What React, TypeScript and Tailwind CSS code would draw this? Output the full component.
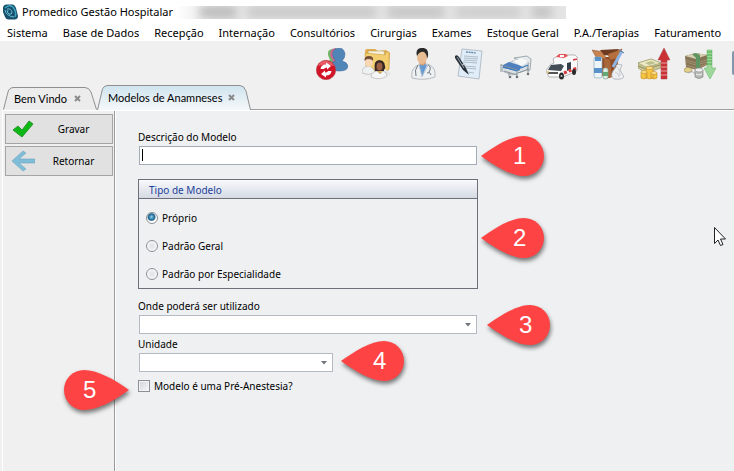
import React from 'react';
import { clsx } from 'clsx';

const menuItems = [
  'Sistema',
  'Base de Dados',
  'Recepção',
  'Internação',
  'Consultórios',
  'Cirurgias',
  'Exames',
  'Estoque Geral',
  'P.A./Terapias',
  'Faturamento',
];

const modelTypes = ['Próprio', 'Padrão Geral', 'Padrão por Especialidade'];

const AppLogo = () => (
  <svg viewBox="0 0 16 16" className="h-4 w-4 shrink-0">
    <path d="M1 4 Q1 1 4 0.500 L11 0.500 Q13 1 14 4 L16 12 Q16 15 13 15.500 L6 15.500 Q4 15 3 13 L1 8Z" fill="#17506a" />
    <path d="M3 4 Q7 0 11 3 Q15 8 13 13" fill="none" stroke="#3fa3c4" strokeWidth="1.500" />
    <path d="M3 6 Q4 12 12 13 M5 5 Q9 4 10 8 Q10 11 7 10 Q4 8 6 6" fill="none" stroke="#69bdd6" />
  </svg>
);

const UsersSyncIcon = () => (
  <svg viewBox="0 0 32 32" className="h-8 w-8">
    <path d="M17 1 q-6 0-5 6 q1 3 2 5 l-3 3 h10z" fill="#71b765" />
    <path d="M20 0 q-6 0-6 7 q1 4 3 5 l-3 4 h9z" fill="#c46a91" />
    <path d="M23 0 C18 0 16 4 17 8 Q18 11 20 13 Q14 14 14 18 Q15 23 23 23 Q32 23 32 18 Q31 14 26 13 Q29 10 29 6 Q28 0 23 0Z" fill="#5085b8" stroke="#416f9e" strokeWidth=".6" />
    <circle cx="10" cy="22" r="9.700" fill="#d21526" stroke="#b1404a" strokeWidth=".6" />
    <path d="M2 18 Q5 12 11 13 Q17 14 18 18 Q10 16 2 18Z" fill="#ef7880" opacity=".7" />
    <path d="M4.500 21 Q5 16.500 10 16.500 L10 14.500 L15 18 L11 21.500 V19.500 Q8.500 19.500 8 21Z M15.500 23 Q15 27.500 10 27.500 V29.500 L5 26 L9 22.500 V24.500 Q11.500 24.500 12 23Z" fill="#fff" />
  </svg>
);

const PatientsIcon = () => (
  <svg viewBox="0 0 32 32" className="h-8 w-8">
    <path d="M3 3 Q3 1 5 1 L13 1 L16 3 L24 2 L28 5 L27 22 L16 27 L5 14Z" fill="#dfae50" />
    <path d="M6 3 L22 3 L23 10 L7 10Z" fill="#f5f0dc" stroke="#b79a5b" strokeWidth=".5" />
    <path d="M3 5 L23 7 L24 4 L27 4 L27 21 L21 25 L4 18Z" fill="#f4cf70" stroke="#c99b3e" strokeWidth=".6" />
    <path d="M0 25 Q0 19 6 18 Q12 19 13 25 Q6 28 0 25Z" fill="#eef1f2" stroke="#aaa" strokeWidth=".6" />
    <ellipse cx="7" cy="14" rx="4" ry="5" fill="#f7d7b4" />
    <path d="M2.500 13 Q2 8 7 8 Q12 8 11 13 Q10 11 6 11 Q4 11 2.500 13Z" fill="#755039" />
    <path d="M13 23 Q11 12 17.500 12 Q25 13 22.500 23Z" fill="#352725" />
    <ellipse cx="17.500" cy="18.500" rx="3" ry="4" fill="#9c5f43" />
    <path d="M22 21 Q28 23 29 27 Q25 28 22 26Z" fill="#e6e6e6" />
    <path d="M9 29 Q9 24 15 23 L18 26 L21 23 Q25 24 25 28 Q18 33 9 29Z" fill="#f5f5f5" stroke="#aaa" strokeWidth=".6" />
  </svg>
);

const DoctorIcon = () => (
  <svg viewBox="0 0 32 32" className="h-8 w-8">
    <path d="M4 30 Q3 22 7 19 L12 16 L19 16 Q26 18 27 24 V29 Q16 33 4 30Z" fill="#eef1f3" stroke="#a8adb1" strokeWidth=".8" />
    <path d="M11 17 L14 29 L19 17 L15 15Z" fill="#659bd0" />
    <path d="M11 15 q3 5 7 0 v-3 h-7z" fill="#d99d75" />
    <ellipse cx="14" cy="9" rx="5" ry="7" fill="#e9bd94" />
    <path d="M9 8 Q7 1 13 0 Q21-1 20 8 L19 11 Q19 6 16 4 Q12 3 9 8Z" fill="#292929" />
    <path d="M10 17 Q6 22 8 28 M20 17 Q24 19 21 24 M19 25 q3-2 4 2" fill="none" stroke="#60686f" strokeWidth=".9" />
    <path d="M11 17 L14 29 L20 17" fill="none" stroke="#bcc7d3" />
  </svg>
);

const ReportIcon = () => (
  <svg viewBox="0 0 32 32" className="h-8 w-8">
    <path d="M8 1 L28 3 L25 31 L4 28Z" fill="#e0edf8" stroke="#9eabb7" strokeWidth=".7" />
    <path d="M12 4 l10 1" stroke="#6287ac" strokeWidth="1.300" strokeDasharray="2 .6" />
    <path d="M10 8 l14 1 M10 10 l14 1 M10 12 l13 1 M9 14 l14 1 M11 18 l11 1 M12 20 l10 1 M13 24 l7 1" stroke="#8b9cab" strokeWidth=".6" />
    <path d="M1 8 Q3 6 5 9 L12 20 L15 27 L9 22 L1 10Z" fill="#29313a" />
    <path d="M3 9 l7 11" stroke="#9aa5ad" />
    <path d="M8 17 l4-1" stroke="#c8cdd2" />
  </svg>
);

const BedIcon = () => (
  <svg viewBox="0 0 32 32" className="h-8 w-8">
    <path d="M14 10 L27 8 L31 11 L30 22 L28 23 L26 15Z" fill="#e6eaec" stroke="#8c979e" strokeWidth=".8" />
    <path d="M3 18 L15 12 L29 15 L27 22 L12 27 L2 23Z" fill="#d9dfe3" stroke="#89969e" strokeWidth=".6" />
    <path d="M3 17 L9 14 L22 18 L19 23 L3 20Z" fill="#4e7fbf" />
    <path d="M13 13 L22 10 L28 14 L21 18Z" fill="#f6f8f8" />
    <path d="M1 16 V24 M1 17 L17 22 V28 M9 24 V28 M28 17 V25 M4 23 L17 27 M18 25 L29 21" fill="none" stroke="#8c969d" />
    <path d="M3 19 l14 4 M21 20 l7-3" stroke="#3679ba" strokeWidth="1.200" />
    <circle cx="10" cy="29" r="1.300" fill="#68737a" />
    <circle cx="17" cy="29" r="1.300" fill="#68737a" />
    <circle cx="28" cy="26" r="1.300" fill="#68737a" />
  </svg>
);

const AmbulanceIcon = () => (
  <svg viewBox="0 0 32 32" className="h-8 w-8">
    <path d="M7 11 L13 7 L29 7 L32 10 L31 23 L17 29 L3 29 L0 23 L4 17 L8 15Z" fill="#fafafa" stroke="#999" strokeWidth=".7" />
    <path d="M5 17 L15 16 L18 18 L15 23 L2 22Z" fill="#424d56" />
    <path d="M21 15 L25 14 V21 L21 23Z" fill="#343f49" />
    <path d="M10 9 L13 6 L20 6 L22 8 L18 10Z" fill="#e65558" />
    <path d="M14 7 h4 v2 h-4z" fill="#fff" />
    <path d="M27 12 L31 11" stroke="#d9383c" strokeWidth="1.500" />
    <path d="M18 25 L31 20" stroke="#d9383c" strokeWidth="3" strokeDasharray="3 2" />
    <path d="M2 25 H12" stroke="#555" strokeWidth="2" />
    <ellipse cx="15.500" cy="28" rx="2.500" ry="3.500" fill="#292929" />
    <ellipse cx="28" cy="24" rx="2" ry="3" fill="#292929" />
    <circle cx="15.500" cy="28" r="1" fill="#ccc" />
    <circle cx="2" cy="24" r="1" fill="#eac55d" />
  </svg>
);

const SuppliesIcon = () => (
  <svg viewBox="0 0 32 32" className="h-8 w-8">
    <path d="M5 7 L12 9 L21 9 L27 7 L24 28 L13 31 L7 24Z" fill="#8f4d27" />
    <path d="M0 2 L12 4 L14 11 L4 9Z" fill="#c98350" stroke="#8a4c28" strokeWidth=".5" />
    <path d="M8 2 L27 1 L22 8 L12 7Z" fill="#6f3a1f" />
    <path d="M16 6 L30 1 L27 10 L18 12Z" fill="#b5703e" stroke="#8a4c28" strokeWidth=".5" />
    <path d="M12 10 L18 12 L20 29 L13 30Z" fill="#a9673a" />
    <path d="M30 3 L21 19" stroke="#8db4e3" strokeWidth="3" />
    <path d="M27 2 l5 3" stroke="#577fa4" />
    <rect x="2" y="9" width="8" height="21" rx="2" fill="#eef5f8" stroke="#91acb9" strokeWidth=".7" />
    <path d="M3 9 h6 v4 H3z M2 20 h8 v5 H2z" fill="#5992cb" />
    <rect x="11" y="20" width="5" height="11" rx="2" fill="#dceee3" stroke="#8dab95" strokeWidth=".7" />
    <path d="M11 24 h5 v4 h-5z" fill="#63aa76" />
    <path d="M21 23 q-3 5 1 8 q8 1 10-2 q-2-4-4-7 l2-5 q-6-2-6 2z" fill="#eceef0" stroke="#a0a6ad" strokeWidth=".7" />
    <path d="M25 19 q3 2 3 9 M23 24 q4 1 4 5" fill="none" stroke="#b3b8bd" strokeWidth=".6" />
  </svg>
);

const IncomeIcon = () => (
  <svg viewBox="0 0 32 32" className="h-8 w-8">
    <path d="M0 15 L13 11 L23 15 L23 20 L8 25 L0 20Z" fill="#c9c493" stroke="#8f8d62" strokeWidth=".6" />
    <path d="M0 15 L13 11 L23 15 L8 19Z" fill="#efeac4" stroke="#999a68" strokeWidth=".6" />
    <path d="M0 18 l8 3 14-4" fill="none" stroke="#777c4c" strokeWidth=".7" />
    <path d="M7 15 l6-2 5 2-7 2z" fill="#b9c08d" />
    <path d="M26 0 L32 12 H29 V31 H23 V12 H20Z" fill="#ca3135" stroke="#a9474b" strokeWidth=".5" />
    <path d="M23 15 h6 M23 19 h6 M23 23 h6 M23 27 h6" stroke="#e4a2a4" />
    <g fill="#f6c440" stroke="#c48d28" strokeWidth=".6">
      <path d="M3 24 v6 q3 2 6 0 v-6z M8 20 v10 q4 2 7 0 V20z M13 25 v5 q3 2 6 0 v-5z" />
      <ellipse cx="6" cy="24" rx="3" ry="1.500" fill="#fbe08a" />
      <ellipse cx="11.500" cy="20" rx="3.500" ry="1.500" fill="#fbe08a" />
      <ellipse cx="16" cy="25" rx="3" ry="1.500" fill="#fbe08a" />
    </g>
  </svg>
);

const ExpenseIcon = () => (
  <svg viewBox="0 0 32 32" className="h-8 w-8">
    <path d="M1 8 L12 5 L23 7 V17 L13 22 L2 19Z" fill="#857356" />
    <path d="M1 8 L12 5 L23 7 L12 11Z" fill="#d6ccb0" />
    <path d="M2 12 l10 3 11-3 M2 14 l10 3 11-3 M2 17 l10 3 11-4" fill="none" stroke="#ad9d7a" strokeWidth=".7" />
    <path d="M8 6 l4-1 4 2 v13 l-4 1 v-11z" fill="#5f9560" />
    <path d="M23 2 h5 v18 h4 l-6 11-6-11 h3z" fill="#9dd89a" stroke="#61b461" strokeWidth=".5" />
    <path d="M23 4 h5 M23 7 h5 M23 10 h5 M23 13 h5 M23 16 h5" stroke="#48a74b" strokeWidth="1.200" />
    <ellipse cx="4" cy="22" rx="4" ry="2.500" fill="#e3d08a" stroke="#908455" strokeWidth=".6" />
    <path d="M4 25 q5-3 7 1" fill="none" stroke="#aaa" />
    <path d="M11 22 v7 q4 3 8 0 v-7z" fill="#b8bab7" stroke="#777" strokeWidth=".6" />
    <ellipse cx="15" cy="22" rx="4" ry="2" fill="#eee" stroke="#888" strokeWidth=".6" />
    <path d="M12 26 q3 2 6 0" fill="none" stroke="#eee" />
  </svg>
);

const ScreenIcon = () => (
  <svg viewBox="0 0 32 32" className="h-8 w-8">
    <rect x="2" y="3" width="28" height="24" rx="2" fill="#8497aa" />
  </svg>
);

const toolbar = [
  { name: 'Usuários', icon: UsersSyncIcon },
  { name: 'Pacientes', icon: PatientsIcon },
  { name: 'Médicos', icon: DoctorIcon },
  { name: 'Laudos', icon: ReportIcon },
  { name: 'Leitos', icon: BedIcon },
  { name: 'Ambulância', icon: AmbulanceIcon },
  { name: 'Estoque', icon: SuppliesIcon },
  { name: 'Receitas', icon: IncomeIcon },
  { name: 'Despesas', icon: ExpenseIcon },
  { name: 'Painel', icon: ScreenIcon },
];

interface TabProps {
  title: string;
  active?: boolean;
}

const Tab: React.FC<TabProps> = ({ title, active }) => (
  <div className={clsx('relative flex items-center justify-between pr-4 pl-[11px]', active ? 'h-[25px] w-[154px]' : 'h-[23px] w-[94px]')}>
    <svg viewBox={active ? '0 0 154 25' : '0 0 94 23'} className="absolute inset-0 h-full w-full">
      <defs>
        <linearGradient id="activeTab" x1="0" y1="0" x2="0" y2="1">
          <stop offset="0" stopColor="#cfe4ee" />
          <stop offset="1" stopColor="#f5f8fa" />
        </linearGradient>
      </defs>
      <path
        d={active ? 'M.5 25 L5 6 Q6 .5 11 .5 H143 Q147 .5 149 6 L153.500 25' : 'M.5 22.500 L5 5 Q6 .5 11 .5 H82 Q86 .5 88 5 L93.500 22.500'}
        fill={active ? 'url(#activeTab)' : '#ececec'}
        stroke="#8f8f8f"
      />
    </svg>
    <button type="button" className="relative leading-4 whitespace-nowrap">{title}</button>
    <button type="button" aria-label={`Fechar ${title}`} className="relative">
      <svg viewBox="0 0 7 7" className="h-[7px] w-[7px]">
        <path d="M1 1 L6 6 M6 1 L1 6" stroke="#8a8a8a" strokeWidth="2" />
      </svg>
    </button>
  </div>
);

interface PinProps {
  number: number;
  flip?: boolean;
  className: string;
}

// Numbered callout; the tip points left unless flipped
const Pin: React.FC<PinProps> = ({ number, flip, className }) => (
  <div className={clsx('pointer-events-none absolute flex h-10 items-center', flip ? 'w-[65px] pl-[19px]' : 'w-[63px] pl-8', className)}>
    <svg
      viewBox={flip ? '0 0 65 40' : '0 0 63 40'}
      className="absolute inset-0 h-full w-full overflow-visible drop-shadow-[1px_3px_2px_rgba(0,0,0,0.5)]"
    >
      <path
        d={flip ? 'M65 20 C50 9 33 0 20 0 A20 20 0 0 0 20 40 C33 40 50 31 65 20Z' : 'M0 20 C14 10 30 0 43 0 A20 20 0 0 1 43 40 C30 40 14 30 0 20Z'}
        fill="#fd4343"
      />
    </svg>
    <span className="relative text-2xl leading-none text-white [font-family:'Liberation_Sans',sans-serif]">{number}</span>
  </div>
);

interface SelectFieldProps {
  id: string;
  label: string;
  width: string;
  children?: React.ReactNode;
}

const SelectField: React.FC<SelectFieldProps> = ({ id, label, width, children }) => (
  <div className="flex flex-col gap-px">
    <label htmlFor={id} className="h-4">{label}</label>
    <div className={clsx('relative ml-px', width)}>
      <select id={id} className="block h-[19px] w-full appearance-none border border-[#b4bac2] bg-white px-1 outline-none">
        <option value=""></option>
      </select>
      <svg viewBox="0 0 6 4" className="pointer-events-none absolute top-2 right-[6px] h-1 w-[6px]">
        <path d="M0 0 H6 L3 3.500Z" fill="#70757b" />
      </svg>
      {children}
    </div>
  </div>
);

export default function App() {
  return (
    <div className="relative flex min-h-screen flex-col overflow-hidden bg-[#f0f0f0] text-black [font-family:'Noto_Sans',sans-serif]">
      <header className="bg-white text-[11px]">
        <div className="flex h-6 items-center pl-[2px]">
          <AppLogo />
          <h1 className="ml-1 min-w-[154px] whitespace-nowrap">Promedico Gestão Hospitalar</h1>
          <div className="flex h-[13px] w-[390px] items-center gap-3 overflow-hidden bg-linear-to-r from-white via-[#e4e4e4] via-10% to-[#e4e4e4] pl-6">
            <span className="h-3 w-9 bg-[#bdbdbd] blur-[4px]"></span>
            <span className="h-3 w-32 bg-[#cacaca] blur-[4px]"></span>
            <span className="h-3 w-14 bg-[#c6c6c6] blur-[4px]"></span>
            <span className="h-3 w-16 bg-[#cecece] blur-[4px]"></span>
            <span className="h-3 w-5 bg-[#c4c4c4] blur-[4px]"></span>
          </div>
        </div>
        <nav className="flex h-[17px] items-center gap-[15px] overflow-hidden pl-[7px] leading-4 whitespace-nowrap">
          {menuItems.map((item) => (
            <button key={item} type="button">{item}</button>
          ))}
        </nav>
      </header>

      <div className="flex h-11 gap-[14px] overflow-hidden pt-[7px] pl-[316px]">
        {toolbar.map(({ name, icon: Icon }) => (
          <button key={name} type="button" aria-label={name} className="h-8 w-8 shrink-0">
            <Icon />
          </button>
        ))}
      </div>

      <div className="flex items-end pl-[3px] text-[11px] [font-family:Lato,sans-serif]">
        <Tab title="Bem Vindo" />
        <Tab title="Modelos de Anamneses" active />
        <div className="flex-1 border-b border-[#a0a0a0]"></div>
      </div>

      <div className="ml-[2px] flex flex-1 border-t border-l border-white text-[10px] leading-4">
        <aside className="flex w-28 shrink-0 flex-col gap-[2px] border-r border-[#9a9a9a] pt-[3px] pr-px pl-[2px]">
          <button type="button" className="flex h-[30px] items-center border border-[#a5a5a5] bg-[#e1e1e1] pl-[5px]">
            <svg viewBox="0 0 24 22" className="h-[22px] w-6">
              <path d="M2 12 L7 8 L11 12 L18 3 L22 6 L11 19Z" fill="#0cb814" stroke="#2c9431" />
            </svg>
            <span className="flex-1">Gravar</span>
          </button>
          <button type="button" className="flex h-[30px] items-center border border-[#a5a5a5] bg-[#e1e1e1] pl-[5px]">
            <svg viewBox="0 0 24 22" className="h-[22px] w-6">
              <path d="M12 1 L1 11 L12 21 L15 19 L8 13 H24 V9 H8 L15 3Z" fill="#7fbdd8" stroke="#6ba6c0" strokeWidth=".6" />
            </svg>
            <span className="flex-1">Retornar</span>
          </button>
        </aside>

        <main className="flex-1 border-l border-white bg-[#eff0f2] pt-[18px] pl-[22px]">
          <form className="flex flex-col items-start">
            <div className="flex flex-col gap-px">
              <label htmlFor="descricao" className="h-4">Descrição do Modelo</label>
              <div className="relative ml-px w-[338px]">
                <input id="descricao" type="text" className="block h-[19px] w-full border border-[#a3adb8] bg-white px-[3px] outline-none" />
                <span className="absolute top-[3px] left-[3px] h-3 w-px bg-black"></span>
                <Pin number={1} className="-top-[10px] left-[342px]" />
              </div>
            </div>

            <fieldset className="relative mt-[14px] w-[340px] border border-[#6d7078]" aria-labelledby="tipo">
              <div id="tipo" className="h-[19px] border-b border-[#6d7078] bg-linear-to-b from-[#f8f9fb] to-[#d5dae4] pl-[10px] leading-[20px] text-[#1c439c]">
                Tipo de Modelo
              </div>
              <div className="flex flex-col gap-3 pt-[11px] pb-[6px] pl-[7px]">
                {modelTypes.map((type, index) => (
                  <label key={type} className="flex h-4 items-center gap-1">
                    <input
                      type="radio"
                      name="tipo"
                      defaultChecked={index === 0}
                      className="h-3 w-3 appearance-none rounded-full border border-[#8b9097] bg-[radial-gradient(circle,#e3e5e8_20%,#ffffff_90%)] checked:bg-[radial-gradient(circle_at_45%_40%,#8fd5f0_0%,#1b5f8c_40%,#ffffff_56%)]"
                    />
                    {type}
                  </label>
                ))}
              </div>
              <Pin number={2} className="top-[38px] left-[342px]" />
            </fieldset>

            <div className="mt-[9px] flex flex-col gap-[2px]">
              <SelectField id="onde" label="Onde poderá ser utilizado" width="w-[338px]">
                <Pin number={3} className="-top-[10px] left-[348px]" />
              </SelectField>
              <SelectField id="unidade" label="Unidade" width="w-[194px]">
                <Pin number={4} className="-top-3 left-[202px]" />
              </SelectField>
            </div>

            <div className="relative mt-[6px]">
              <label className="flex h-4 items-center gap-1">
                <input
                  type="checkbox"
                  className="h-3 w-3 appearance-none border border-[#8b9097] bg-linear-to-br from-[#cfd3d9] to-[#f8f9fa] shadow-[inset_0_0_0_1px_#f4f4f4]"
                />
                Modelo é uma Pré-Anestesia?
              </label>
              <Pin number={5} flip className="-top-2 -left-[74px]" />
            </div>
          </form>
        </main>
      </div>

      {/* mouse pointer resting over the form */}
      <svg viewBox="0 0 12 19" className="pointer-events-none absolute top-[227px] right-[8px] h-[19px] w-3">
        <path d="M.5 .5 V16.500 L4 13 L6.500 18.500 L9 17.500 L6.500 12 H11.500Z" fill="#fff" stroke="#222" />
      </svg>
    </div>
  );
}
